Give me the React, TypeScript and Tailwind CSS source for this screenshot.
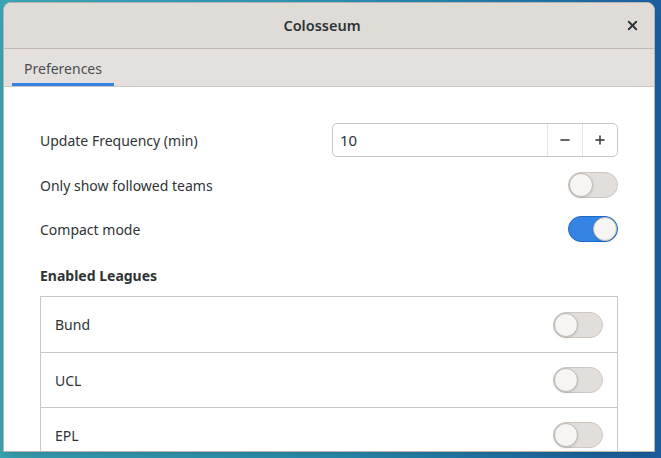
import { X, Minus, Plus } from "lucide-react";

const font = { fontFamily: '"Noto Sans", "Open Sans", sans-serif' };

const Switch = ({ on = false }: { on?: boolean }) => (
  <div
    className={`flex h-[26px] w-[50px] items-center rounded-full border ${
      on ? "justify-end border-[#1b6acb] bg-[#3584e4]" : "justify-start border-[#cdc7c2] bg-[#e1dedb]"
    }`}
  >
    <div className="h-[24px] w-[24px] rounded-full border border-[#bfb8b1] bg-[#f6f5f4] shadow-sm" />
  </div>
);

const leagues = ["Bund", "UCL", "EPL"];

export default function App() {
  return (
    <div
      className="h-[458px] w-[661px] overflow-hidden bg-gradient-to-r from-[#3aa3b4] via-[#2a8fb0] to-[#1b5e9e] pt-[2px] pl-[3px] pr-[6px]"
      style={font}
    >
      <div className="flex h-[450px] flex-col overflow-hidden rounded-t-[8px] border border-[#b9b4ae] bg-white text-[#2e3436] shadow-lg">
        <div className="flex h-[46px] shrink-0 items-center border-b border-[#c0bab4] bg-[#dfdcd8]">
          <div className="flex-1" />
          <div className="text-[14.5px] font-semibold text-[#2e3436]">Colosseum</div>
          <div className="flex flex-1 justify-end pr-[14px]">
            <X className="h-[15px] w-[15px]" strokeWidth={3} />
          </div>
        </div>
        <div className="flex h-[38px] shrink-0 items-end border-b border-[#cdc7c2] bg-[#e3e0dd] pl-[8px]">
          <div className="flex h-full w-[102px] flex-col justify-between">
            <div className="flex flex-1 items-center justify-center pt-[5px] text-[14px] text-[#4a4f52]">Preferences</div>
            <div className="h-[3px] bg-[#3584e4]" />
          </div>
        </div>
        <div className="flex flex-col px-[36px] pt-[36px] text-[14px]">
          <div className="flex h-[34px] items-center justify-between">
            <span>Update Frequency (min)</span>
            <div className="flex h-[34px] w-[286px] items-stretch rounded-[5px] border border-[#cdc7c2]">
              <div className="flex flex-1 items-center pl-[7px] text-[15px]">10</div>
              <div className="flex w-[35px] items-center justify-center border-l border-[#e6e3e0]">
                <Minus className="h-[14px] w-[14px]" strokeWidth={2.5} />
              </div>
              <div className="flex w-[35px] items-center justify-center border-l border-[#e6e3e0]">
                <Plus className="h-[14px] w-[14px]" strokeWidth={2.5} />
              </div>
            </div>
          </div>
          <div className="mt-[15px] flex h-[26px] items-center justify-between">
            <span>Only show followed teams</span>
            <Switch />
          </div>
          <div className="mt-[18px] flex h-[26px] items-center justify-between">
            <span>Compact mode</span>
            <Switch on />
          </div>
          <div className="mt-[23px] font-bold">Enabled Leagues</div>
          <div className="mt-[10px] border border-[#cdc7c2]">
            {leagues.map((l, i) => (
              <div
                key={l}
                className={`flex h-[55px] items-center justify-between pl-[14px] pr-[14px] ${
                  i > 0 ? "border-t border-[#cdc7c2]" : ""
                }`}
              >
                <span>{l}</span>
                <Switch />
              </div>
            ))}
          </div>
        </div>
      </div>
    </div>
  );
}
